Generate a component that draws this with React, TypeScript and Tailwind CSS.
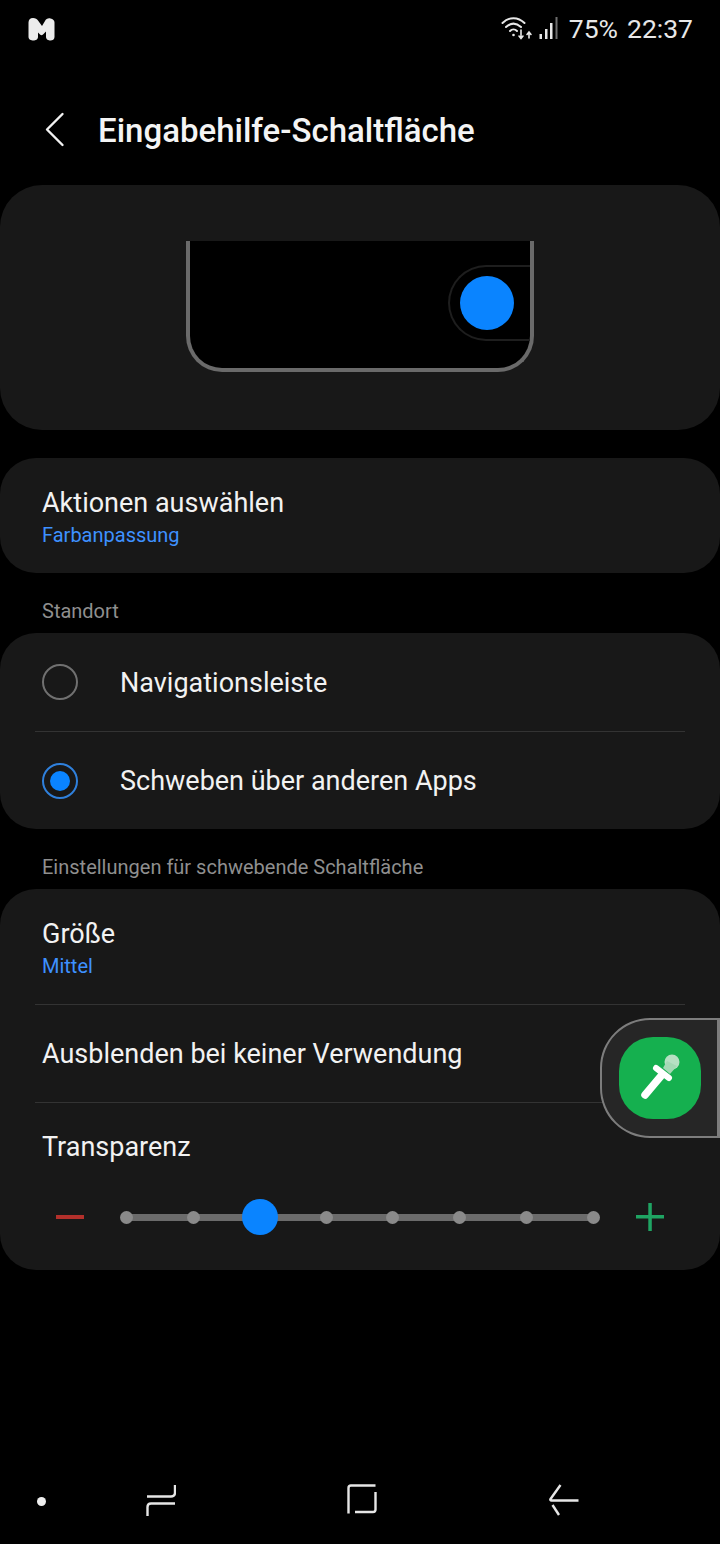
import React from "react";

function Row({ title, sub }: { title: string; sub?: string }) {
  return (
    <div className="flex flex-col">
      <span className="text-[27px] leading-[32px] text-[#f2f2f2]">{title}</span>
      {sub && <span className="mt-[3px] text-[20px] leading-[26px] text-[#3e91ff]">{sub}</span>}
    </div>
  );
}

function Label({ children }: { children: React.ReactNode }) {
  return <div className="h-[60px] pl-[42px] pt-[26px] text-[20px] leading-[24px] text-[#8f8f8f]">{children}</div>;
}

function Divider() {
  return <div className="mx-[35px] h-px bg-[#333333]" />;
}

const dots = [0, 1, 2, 3, 4, 5, 6, 7];

export default function App() {
  return (
    <div className="relative flex h-[1544px] w-[720px] flex-col overflow-hidden bg-black font-['Roboto',sans-serif] text-white">
      {/* status bar */}
      <div className="flex h-[56px] items-start justify-between pl-[28px] pr-[27px] pt-[17px]">
        <svg width="27" height="24" viewBox="0 0 27 24">
          <path
            d="M5 1C7.500 1 9 2 10 3.500L14 9L17 4C18 2 20 1 22.500 1.500C25 2 26.500 3.500 26.500 5.500V20C26.500 22.500 24.500 23.500 22.500 23.500C20.500 23.500 18 22.500 18 20V14.500L15 17.500C14 18.500 13 18.500 12 17.500L10 15.500V20C10 22.500 7.500 23.500 5.500 23.500C3 23.500 0.500 22.500 0.500 20V5.500C0.500 3 2 1 5 1Z"
            fill="#ececec"
          />
        </svg>
        <div className="flex items-center">
          <svg width="32" height="26" viewBox="0 0 32 26" fill="none" stroke="#e8e8e8" strokeWidth="2" strokeLinecap="round" className="mt-[-3px]">
            <path d="M1.500 8C8 1.500 17 1.500 23.500 8" />
            <path d="M5 12C10 7.500 15 7.500 20 12" />
            <path d="M9 16C11 14 14 14 16 16" />
            <circle cx="12.500" cy="20" r="1.300" fill="#e8e8e8" stroke="none" />
            <path d="M20 15V23M18 21L20 23.500L22 21" strokeWidth="1.600" />
            <path d="M28 23V17.500M26 19.500L28 17L30 19.500" strokeWidth="1.600" />
          </svg>
          <svg width="20" height="24" viewBox="0 0 20 24" fill="#e8e8e8" className="ml-[6px] mt-[-3px]">
            <rect x="0.500" y="18" width="2.500" height="5" />
            <rect x="6" y="13" width="2.500" height="10" />
            <rect x="11" y="7" width="2.500" height="16" />
            <rect x="16.500" y="1" width="2" height="22" fill="#6e6e6e" />
          </svg>
          <span className="ml-[10px] text-[26.500px] leading-[24px] text-[#e8e8e8]">75%</span>
          <span className="ml-[9px] text-[26.500px] leading-[24px] text-[#e8e8e8]">22:37</span>
        </div>
      </div>

      {/* header */}
      <div className="flex h-[129px] items-start pl-[45px] pt-[56px]">
        <svg width="20" height="36" viewBox="0 0 20 36" fill="none" stroke="#f2f2f2" strokeWidth="2.400" strokeLinecap="round" strokeLinejoin="round">
          <path d="M17.500 2L2 17.500L17.500 33" />
        </svg>
        <h1 className="ml-[33px] text-[33px] font-medium leading-[38px] text-[#f4f4f4]">Eingabehilfe-Schaltfläche</h1>
      </div>

      {/* preview card */}
      <div className="flex h-[245px] justify-center rounded-[42px] bg-[#181818] pt-[56px]">
        <div className="flex h-[131px] w-[348px] items-start justify-end rounded-b-[36px] border-x-[4px] border-b-[4px] border-[#6a6a6a] bg-black pt-[24px]">
          <div className="flex h-[76px] w-[82px] items-center rounded-l-[38px] border-y-2 border-l-2 border-[#1e1e1e] pl-[10px]">
            <div className="h-[54px] w-[54px] rounded-full bg-[#0a84ff]" />
          </div>
        </div>
      </div>

      {/* action card */}
      <div className="mt-[28px] flex h-[115px] flex-col justify-center rounded-[36px] bg-[#181818] pl-[42px] pt-[4px]">
        <Row title="Aktionen auswählen" sub="Farbanpassung" />
      </div>

      <Label>Standort</Label>

      {/* location card */}
      <div className="rounded-[36px] bg-[#181818]">
        <div className="flex h-[98px] items-center pl-[42px]">
          <div className="h-[36px] w-[36px] rounded-full border-2 border-[#707070]" />
          <span className="ml-[42px] mt-[1px] text-[27px] leading-[32px] text-[#f2f2f2]">Navigationsleiste</span>
        </div>
        <Divider />
        <div className="flex h-[97px] items-center pl-[42px]">
          <div className="flex h-[36px] w-[36px] items-center justify-center rounded-full border-2 border-[#2f80dc]">
            <div className="h-[20px] w-[20px] rounded-full bg-[#0a84ff]" />
          </div>
          <span className="ml-[42px] text-[27px] leading-[32px] text-[#f2f2f2]">Schweben über anderen Apps</span>
        </div>
      </div>

      <Label>Einstellungen für schwebende Schaltfläche</Label>

      {/* floating settings card */}
      <div className="h-[381px] rounded-[36px] bg-[#181818]">
        <div className="flex h-[115px] flex-col justify-center pl-[42px] pt-[4px]">
          <Row title="Größe" sub="Mittel" />
        </div>
        <Divider />
        <div className="flex h-[97px] items-center pl-[42px]">
          <Row title="Ausblenden bei keiner Verwendung" />
        </div>
        <Divider />
        <div className="pl-[42px] pt-[28px]">
          <Row title="Transparenz" />
        </div>
        <div className="mt-[36px] flex h-[36px] items-center pl-[56px]">
          <div className="h-[4px] w-[28px] bg-[#b3302b]" />
          <div className="relative ml-[36px] flex h-[36px] w-[480px] items-center justify-between">
            <div className="absolute left-[6px] right-[6px] top-[15px] h-[7px] bg-[#6b6b6b]" />
            {dots.map((d) =>
              d === 2 ? (
                <div key={d} className="relative mx-[-12px] h-[36px] w-[36px] rounded-full bg-[#0a84ff]" />
              ) : (
                <div key={d} className="relative h-[13px] w-[13px] rounded-full bg-[#8a8a8a]" />
              )
            )}
          </div>
          <svg width="28" height="28" viewBox="0 0 28 28" className="ml-[36px]" fill="#1fa463">
            <rect x="0" y="12" width="28" height="3.500" />
            <rect x="12.300" y="0" width="3.500" height="28" />
          </svg>
        </div>
      </div>

      {/* nav bar */}
      <div className="mt-auto flex h-[88px] items-start pl-[37px] pt-[28px]">
        <div className="mt-[13px] h-[9px] w-[9px] rounded-full bg-[#eeeeee]" />
        <svg width="30" height="32" viewBox="0 0 30 32" fill="none" stroke="#e6e6e6" strokeWidth="2.400" className="ml-[100px]">
          <path d="M1 12.500H25C27.500 12.500 29 11 29 8.500V1" />
          <path d="M1.500 32V23C1.500 20.500 3 19.500 5 19.500H29" />
        </svg>
        <svg width="30" height="30" viewBox="0 0 30 30" fill="none" stroke="#e6e6e6" strokeWidth="2.400" className="ml-[171px]">
          <path d="M1.500 29.500V4C1.500 2.300 2.500 1.500 4 1.500H28.500" />
          <path d="M28.500 8V25.500C28.500 27.300 27.500 28 26 28H8" />
        </svg>
        <svg width="30" height="32" viewBox="0 0 30 32" fill="none" stroke="#e6e6e6" strokeWidth="2.400" className="ml-[172px]">
          <path d="M11.500 1L1.500 15C1 15.700 1.500 16.500 2.500 16.500H29.500" />
          <path d="M3.500 21L10 31" />
        </svg>
      </div>

      {/* floating accessibility button */}
      <div className="absolute left-[600px] top-[1018px] flex h-[120px] w-[120px] items-center rounded-l-[50px] border-y-2 border-l-2 border-r-[3px] border-[#7d7d7d] bg-[#262626] pl-[17px]">
        <div className="flex h-[82px] w-[82px] items-center justify-center rounded-[34px] bg-[#15b04f]">
          <svg width="82" height="82" viewBox="0 0 82 82">
            <circle cx="53" cy="25" r="7.500" fill="#b6e0c3" />
            <path d="M44 31L48 24L58 29L51 37Z" fill="#a4d9b5" />
            <path d="M26 58L42 39" stroke="#ffffff" strokeWidth="7.500" strokeLinecap="round" />
            <path d="M37 31L50 41" stroke="#ffffff" strokeWidth="6" strokeLinecap="round" />
          </svg>
        </div>
      </div>
    </div>
  );
}
